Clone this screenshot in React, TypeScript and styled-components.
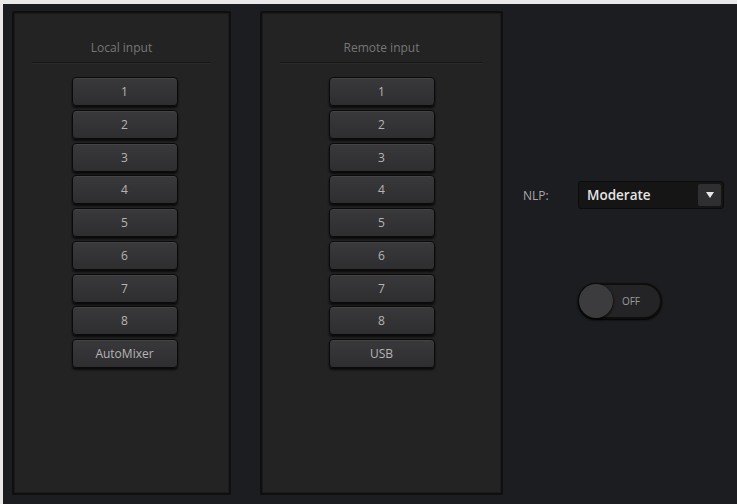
import React, { useState } from 'react'
import styled, { createGlobalStyle } from 'styled-components'

const GlobalStyle = createGlobalStyle`
  html, body {
    margin: 0;
    padding: 0;
    background: #e9e9e9;
    font-family: "Open Sans", "Liberation Sans", sans-serif;
  }
`

const localInputs = ['1', '2', '3', '4', '5', '6', '7', '8', 'AutoMixer']
const remoteInputs = ['1', '2', '3', '4', '5', '6', '7', '8', 'USB']

type ChannelPanelProps = {
  title: string,
  channels: string[],
  width: number,
  offset: number
}

const ChannelPanel = ({ title, channels, width, offset }: ChannelPanelProps) => {
  const [selected, setSelected] = useState<string | null>(null)
  return (
    <Panel $width={width}>
      <PanelTitle>{title}</PanelTitle>
      <Divider />
      <ButtonList $offset={offset}>
        {channels.map(ch => (
          <ChannelButton
            key={ch}
            $active={selected === ch}
            onClick={() => setSelected(selected === ch ? null : ch)}
          >
            {ch}
          </ChannelButton>
        ))}
      </ButtonList>
    </Panel>
  )
}

const App = () => {
  const [nlp, setNlp] = useState('Moderate')
  const [enabled, setEnabled] = useState(false)

  return (
    <>
      <GlobalStyle />
      <Frame>
        <ChannelPanel title="Local input" channels={localInputs} width={219} offset={6} />
        <ChannelPanel title="Remote input" channels={remoteInputs} width={243} offset={0} />
        <Settings>
          <NlpRow>
            <NlpLabel>NLP:</NlpLabel>
            <SelectBox>
              <Select value={nlp} onChange={e => setNlp(e.target.value)}>
                <option>Off</option>
                <option>Mild</option>
                <option>Moderate</option>
                <option>Aggressive</option>
              </Select>
              <ArrowBox>
                <svg width="8" height="6" viewBox="0 0 8 6">
                  <path d="M0 0 L8 0 L4 6 Z" fill="#e8e8e8" />
                </svg>
              </ArrowBox>
            </SelectBox>
          </NlpRow>
          <ToggleRow>
            <Toggle $on={enabled} onClick={() => setEnabled(!enabled)}>
              <Knob $on={enabled} />
              <ToggleText $on={enabled}>{enabled ? 'ON' : 'OFF'}</ToggleText>
            </Toggle>
          </ToggleRow>
        </Settings>
      </Frame>
    </>
  )
}

const Frame = styled.div`
  margin: 4px 0 0 3px;
  height: 500px;
  box-sizing: border-box;
  background: #1c1d20;
  display: flex;
  align-items: flex-start;
  padding: 7px 0 0 9px;
`

const Panel = styled.div<{ $width: number }>`
  flex-shrink: 0;
  width: ${p => p.$width}px;
  height: 484px;
  margin-right: 29px;
  box-sizing: border-box;
  background: #232323;
  border: 2px solid #0f0f0f;
  border-radius: 2px;
  box-shadow: inset 0 0 0 1px #1a1a1a;
  display: flex;
  flex-direction: column;
  align-items: center;

  & + & {
    margin-right: 0;
  }
`

const PanelTitle = styled.div`
  margin-top: 27px;
  font-size: 12px;
  line-height: 16px;
  color: #767676;
`

const Divider = styled.div`
  align-self: stretch;
  margin: 6px 18px 0;
  height: 1px;
  background: #151515;
  box-shadow: 0 1px 0 #2b2b2b;
`

const ButtonList = styled.div<{ $offset: number }>`
  margin-top: 14px;
  margin-left: ${p => p.$offset}px;
  display: flex;
  flex-direction: column;
  gap: 3.75px;
`

const ChannelButton = styled.button<{ $active: boolean }>`
  width: 106px;
  height: 29px;
  box-sizing: border-box;
  border: 1px solid #0a0a0a;
  border-radius: 4px;
  background: ${p => p.$active
    ? 'linear-gradient(#4a5a6a, #3a4856)'
    : 'linear-gradient(#39393b, #2e2e30)'};
  box-shadow: inset 0 1px 0 #444446, 0 2px 2px #0b0b0b;
  color: #b4b4b4;
  font-family: "Open Sans", "Liberation Sans", sans-serif;
  font-size: 12px;
  padding: 0;
  cursor: pointer;
`

const Settings = styled.div`
  flex: 1;
  display: flex;
  flex-direction: column;
  padding-left: 20px;
  padding-top: 170px;
`

const NlpRow = styled.div`
  display: flex;
  align-items: center;
  gap: 18px;
`

const NlpLabel = styled.span`
  font-size: 12px;
  color: #a8a8a8;
  width: 37px;
`

const SelectBox = styled.div`
  position: relative;
  width: 146px;
  height: 28px;
  background: #151515;
  border: 1px solid #0b0b0b;
  border-radius: 3px;
  box-sizing: border-box;
`

const Select = styled.select`
  appearance: none;
  width: 100%;
  height: 100%;
  background: transparent;
  border: none;
  outline: none;
  color: #e4e4e4;
  font-family: "Open Sans", "Liberation Sans", sans-serif;
  font-size: 13.5px;
  font-weight: 600;
  padding: 0 0 0 8px;
  cursor: pointer;
`

const ArrowBox = styled.div`
  position: absolute;
  right: 2px;
  top: 2px;
  bottom: 2px;
  width: 23px;
  background: #2f2f31;
  border-radius: 2px;
  display: flex;
  align-items: center;
  justify-content: center;
  pointer-events: none;
`

const ToggleRow = styled.div`
  margin-top: 74px;
  padding-left: 55px;
`

const Toggle = styled.div<{ $on: boolean }>`
  position: relative;
  width: 84px;
  height: 36px;
  box-sizing: border-box;
  border-radius: 18px;
  background: ${p => p.$on ? '#2f4a36' : '#242426'};
  border: 2px solid #0e0e0e;
  box-shadow: 0 1px 2px #000;
  cursor: pointer;
`

const Knob = styled.div<{ $on: boolean }>`
  position: absolute;
  top: -1px;
  left: ${p => p.$on ? '48px' : '-1px'};
  width: 34px;
  height: 34px;
  border-radius: 50%;
  background: #3c3c3e;
  box-shadow: 0 1px 3px #000;
`

const ToggleText = styled.span<{ $on: boolean }>`
  position: absolute;
  top: 0;
  bottom: 0;
  ${p => p.$on ? 'left: 14px;' : 'right: 20px;'}
  display: flex;
  align-items: center;
  font-size: 10px;
  color: #9a9a9a;
`

export default App
